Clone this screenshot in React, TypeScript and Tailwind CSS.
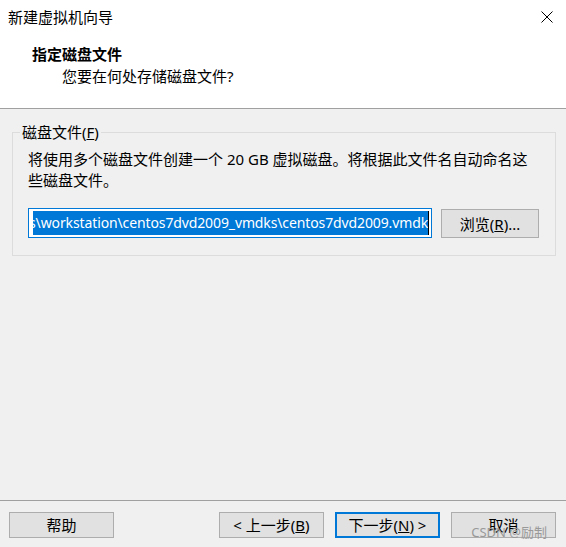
export default function App() {
  const btn =
    "w-[105px] h-[26px] bg-[#e1e1e1] border border-[#adadad] flex items-center justify-center leading-[20px] text-[15px]";
  return (
    <div className="w-[566px] h-[547px] bg-[#f0f0f0] flex flex-col overflow-hidden text-black text-[15px] font-['Noto_Sans','Noto_Sans_CJK_SC',sans-serif]">
      <div className="h-[109px] shrink-0 bg-white border-b border-[#a0a0a0] flex flex-col">
        <div className="h-[34px] flex items-center justify-between pl-[8px] pr-[13px]">
          <span className="leading-[20px]">新建虚拟机向导</span>
          <svg width="12" height="12" viewBox="0 0 12 12">
            <path d="M0.5 0.5 L11.5 11.5 M11.5 0.5 L0.5 11.5" stroke="#000" strokeWidth="1" fill="none" />
          </svg>
        </div>
        <div className="pl-[32px] mt-[10px] leading-[20px] font-bold">指定磁盘文件</div>
        <div className="pl-[62px] mt-[2px] leading-[20px]">您要在何处存储磁盘文件?</div>
      </div>

      <fieldset className="ml-[12px] w-[544px] mt-[13px] border border-[#dcdcdc] pl-[15px] pr-[15px] pb-[17px]">
        <legend className="ml-[-8px] px-[2px] leading-[20px]">
          磁盘文件(<span className="underline">F</span>)
        </legend>
        <div className="mt-[7px] leading-[21px] whitespace-nowrap">
          将使用多个磁盘文件创建一个 20 GB 虚拟磁盘。将根据此文件名自动命名这
          <br />
          些磁盘文件。
        </div>
        <div className="mt-[17px] flex items-start gap-[9px]">
          <div className="w-[404px] h-[30px] border border-[#0078d7] bg-white py-[2px] pl-[4px] pr-[2px] flex">
            <div className="flex-1 h-full overflow-hidden flex justify-end items-center">
              <span className="whitespace-nowrap bg-[#0078d7] text-white text-[14px] tracking-[-0.12px] leading-[24px] h-full">
                D:\Virtual Machines\workstation\centos7dvd2009_vmdks\centos7dvd2009.vmdk
              </span>
              <span className="w-[1px] h-full bg-black shrink-0" />
            </div>
          </div>
          <div className="mt-[1px] w-[98px] h-[29px] bg-[#e1e1e1] border border-[#adadad] flex items-center justify-center leading-[20px]">
            浏览(<span className="underline">R</span>)...
          </div>
        </div>
      </fieldset>

      <div className="flex-1" />

      <div className="relative h-[47px] shrink-0 border-t border-[#a0a0a0] pt-[11px] pl-[9px] pr-[10px] flex items-start">
        <div className={btn}>帮助</div>
        <div className="ml-auto flex gap-[11px]">
          <div className={btn}>
            &lt; 上一步(<span className="underline">B</span>)
          </div>
          <div className="w-[105px] h-[26px] bg-[#e1e1e1] border-2 border-[#0078d7] flex items-center justify-center leading-[20px]">
            下一步(<span className="underline">N</span>) &gt;
          </div>
          <div className={btn}>取消</div>
        </div>
        <span className="absolute right-[19px] top-[23px] text-[13px] leading-[16px] text-[#999999] whitespace-nowrap">
          CSDN @励制
        </span>
      </div>
    </div>
  );
}
